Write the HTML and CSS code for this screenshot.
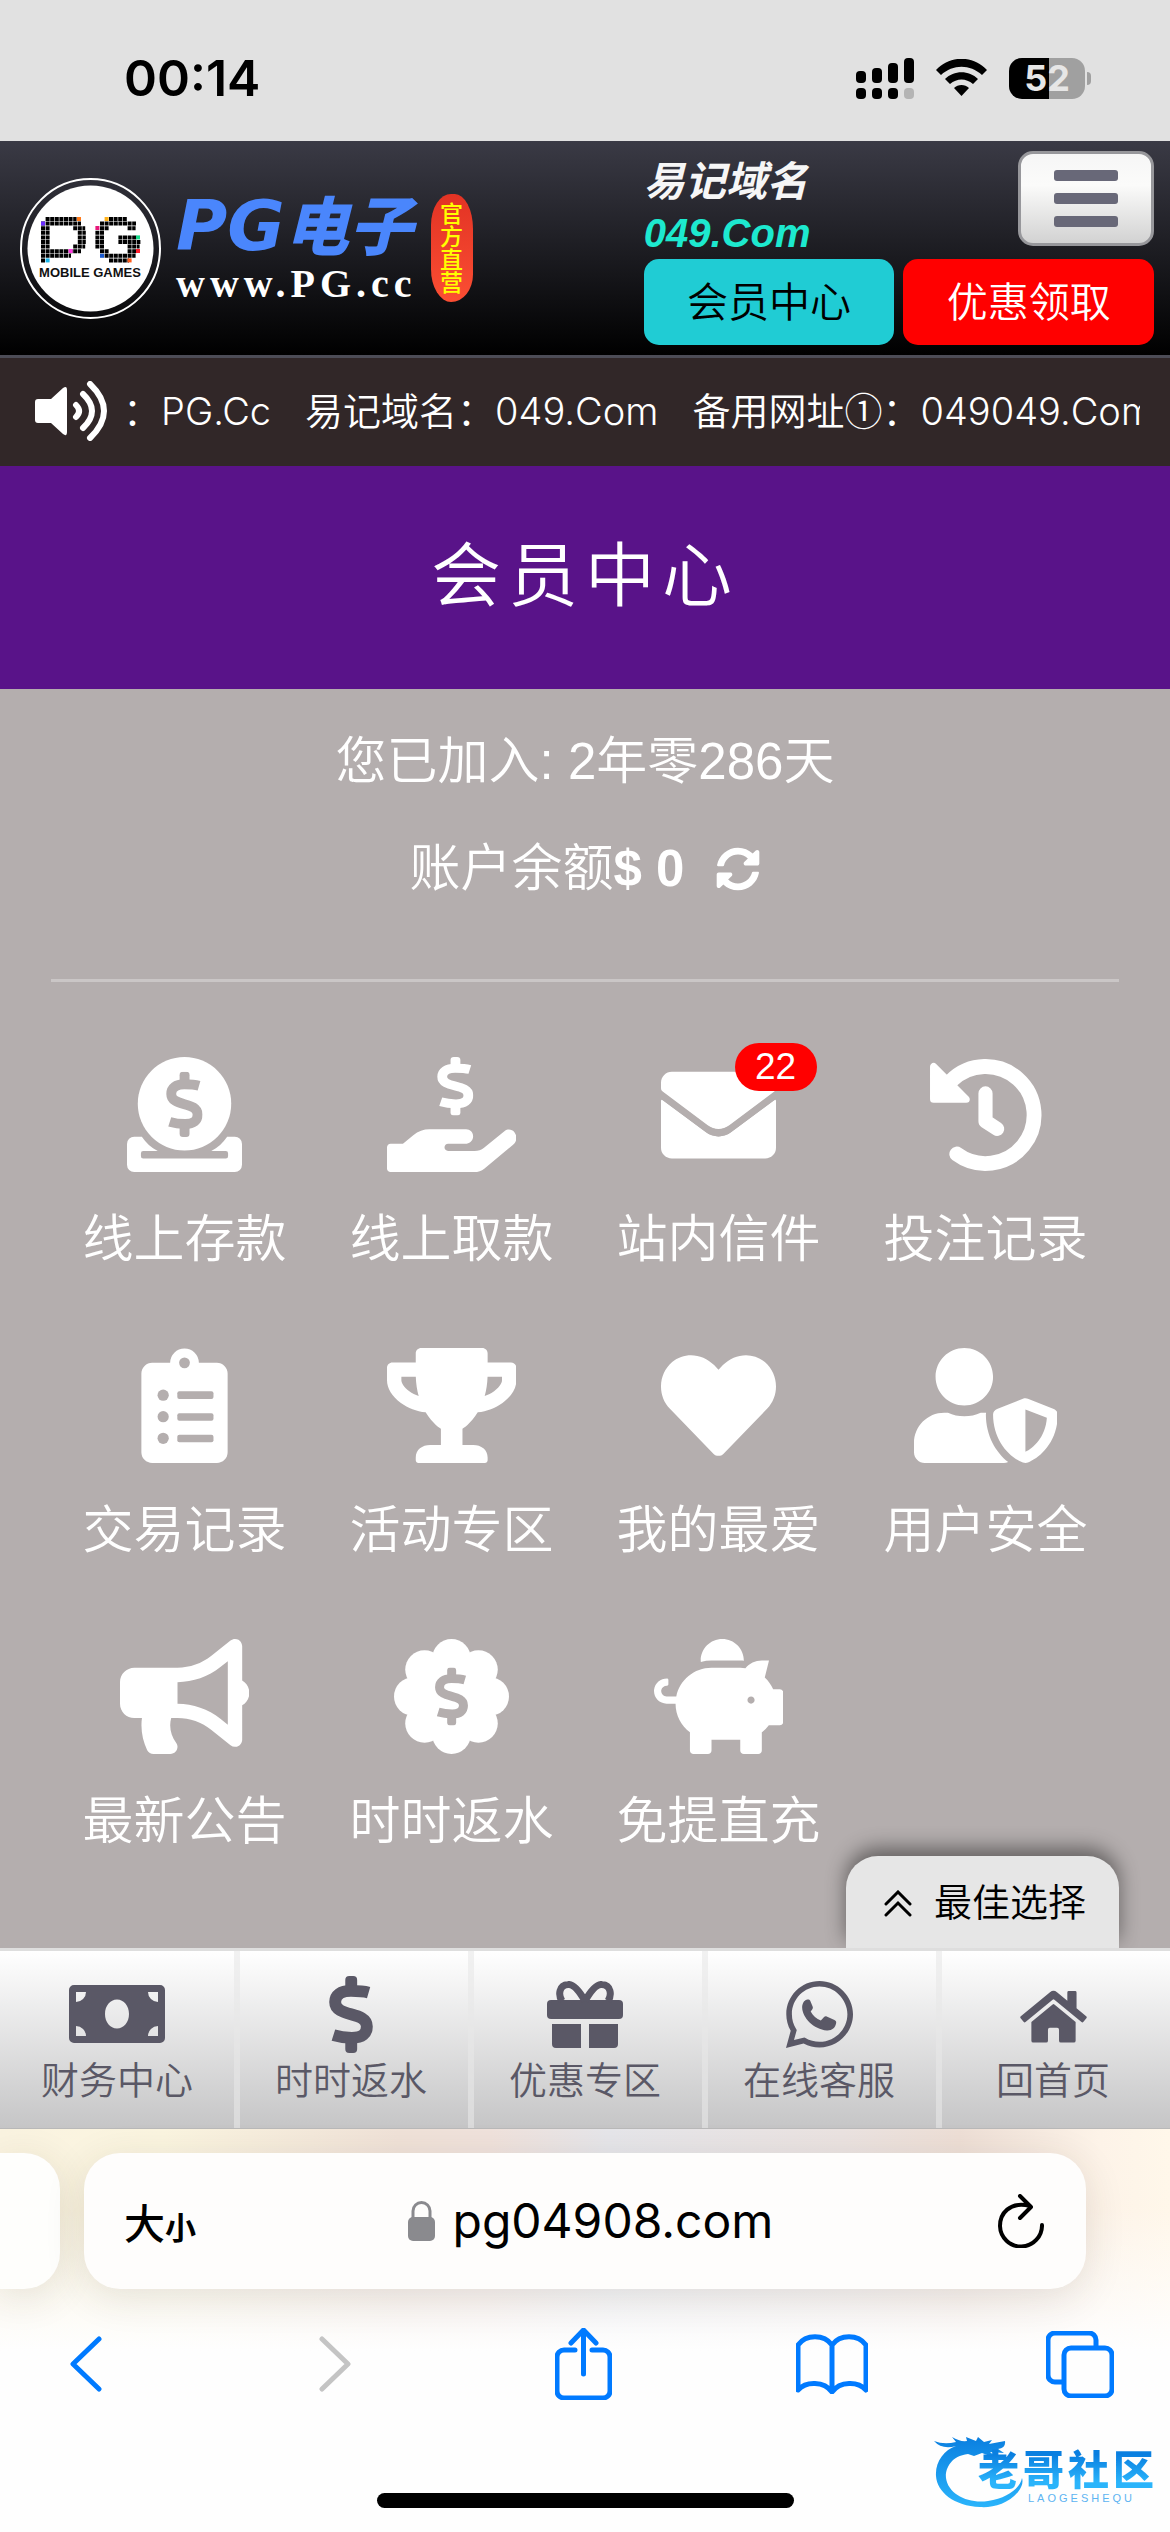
FILE: index.html
```html
<!DOCTYPE html>
<html lang="zh-CN">
<head>
<meta charset="utf-8">
<meta name="viewport" content="width=device-width, initial-scale=1">
<title>会员中心</title>
<link rel="stylesheet" href="styles.css">
</head>
<body>
<svg class="defs" width="0" height="0" aria-hidden="true">
  <symbol id="dollar" viewBox="0 0 100 177" preserveAspectRatio="none">
    <rect x="37" y="0" width="27" height="34" rx="9" fill="currentColor"/>
    <rect x="37" y="143" width="27" height="34" rx="9" fill="currentColor"/>
    <path d="M90 38C76 34 64 34 50 34C26 34 14 44 14 60C14 96 86 80 86 116C86 132 76 142 52 142C38 142 26 141 10 136" fill="none" stroke="currentColor" stroke-width="27"/>
  </symbol>
</svg>

<div class="status">
  <time class="clock">00:14</time>
  <div class="status-icons">
    <svg width="58" height="41" viewBox="0 0 58 41">
      <g fill="#000"><rect x="0" y="13" width="10" height="12" rx="4"/><rect x="16" y="10" width="10" height="15" rx="4"/><rect x="32" y="5" width="10" height="20" rx="4"/><rect x="48" y="0" width="10" height="25" rx="4"/>
      <rect x="0" y="30" width="10" height="11" rx="4"/><rect x="16" y="30" width="10" height="11" rx="4"/><rect x="32" y="30" width="10" height="11" rx="4"/></g>
      <rect x="48" y="30" width="10" height="11" rx="4" fill="#b4b4b4"/>
    </svg>
    <svg width="51" height="38" viewBox="0 0 51 38">
      <path d="M0 11C14-4 37-4 51 11L46 16C34 5 17 5 5 16zM9 20C18 11 33 11 42 20L37 25C30 19 21 19 14 25zM18 29C22 25 29 25 33 29L25.500 37z" fill="#000"/>
    </svg>
    <div class="battery"><span class="battery-level">52</span></div>
  </div>
</div>

<header class="header">
  <a class="brand" href="#">
    <svg class="emblem" width="141" height="141" viewBox="0 0 141 141">
      <circle cx="70.500" cy="70.500" r="69.500" fill="none" stroke="#fff" stroke-width="2"/>
      <circle cx="70.500" cy="70.500" r="63" fill="#fff"/>
      <g stroke="#000" stroke-width="4" stroke-dasharray="4 .6" fill="none">
        <path d="M25.600 41h31M21 45.600h40M21 50.200h9M53.200 50.200h12M21 54.800h9M57.800 54.800h8M21 59.400h9M57.800 59.400h8M21 64h9M57.800 64h8M21 68.600h9M53.200 68.600h12M21 73.200h40M21 77.800h30M21 82.400h4"/>
        <path d="M89 41h18M80 45.600h36M80 50.200h9M107.600 50.200h8M75.400 54.800h9M75.400 59.400h9M98.400 59.400h18M75.400 64h9M98.400 64h22M75.400 68.600h9M107.600 68.600h12M80 73.200h9M107.600 73.200h9M84.600 77.800h31M89 82.400h20"/>
      </g>
      <rect x="21" y="43.500" width="4" height="4" fill="#6a2cff"/><rect x="57" y="39" width="4" height="4" fill="#ff7a1a"/><rect x="48.600" y="71" width="4" height="4" fill="#ff3ae0"/><rect x="25.600" y="80.400" width="4" height="4" fill="#19b5ea"/>
      <rect x="84.600" y="39" width="4" height="4" fill="#ffb21a"/><rect x="75.400" y="48" width="4" height="4" fill="#e6177a"/><rect x="116" y="57.400" width="4" height="4" fill="#19d98b"/><rect x="116" y="71" width="4" height="4" fill="#ff1f2d"/><rect x="80" y="75.800" width="4" height="4" fill="#1a5ad0"/><rect x="107.600" y="80.400" width="4" height="4" fill="#ff5a1a"/>
      <text class="emblem-text" x="70" y="99" text-anchor="middle">MOBILE GAMES</text>
    </svg>
    <span class="wordmark">
      <span class="wordmark-name"><span class="wordmark-latin">PG</span>电子</span>
      <span class="wordmark-url">www.PG.cc</span>
    </span>
    <span class="seal">官方直营</span>
  </a>
  <div class="header-side">
    <div class="header-top">
      <p class="domain">易记域名<br><span class="domain-url">049.Com</span></p>
      <button class="menu" type="button" aria-label="菜单"><span class="menu-bar"></span><span class="menu-bar"></span><span class="menu-bar"></span></button>
    </div>
    <div class="header-buttons">
      <button class="pill pill-member" type="button">会员中心</button>
      <button class="pill pill-bonus" type="button">优惠领取</button>
    </div>
  </div>
</header>

<div class="notice">
  <svg class="notice-icon" width="72" height="60" viewBox="0 0 72 60">
    <path d="M3 18h13L28 7q4-3 4 2v42q0 5-4 2L16 42H3q-3 0-3-3V21q0-3 3-3z" fill="#fff"/>
    <path d="M41 24q6 6 0 12M48 13q18 17 0 34M55 3q28 27 0 54" fill="none" stroke="#fff" stroke-width="6" stroke-linecap="round"/>
  </svg>
  <p class="notice-text"><span>：</span><span class="notice-item">PG.Cc</span><span class="notice-item">易记域名：049.Com</span><span class="notice-item">备用网址<span class="circled">①</span>：049049.Com</span></p>
</div>

<h1 class="title">会员中心</h1>

<main class="member">
  <p class="info">您已加入: 2年零286天</p>
  <p class="info">账户余额<b>$ 0</b>
    <button class="refresh" type="button" aria-label="刷新余额"><svg width="44" height="44" viewBox="0 0 512 512" fill="#fff"><path d="M370.720 133.280C339.458 104.008 298.888 87.962 255.848 88c-77.458.068-144.328 53.178-162.791 126.850-1.344 5.363-6.122 9.150-11.651 9.150H24.103c-7.498 0-13.194-6.807-11.807-14.176C33.933 94.924 134.813 8 256 8c66.448 0 126.791 26.136 171.315 68.685L463.030 40.970C478.149 25.851 504 36.559 504 57.941V192c0 13.255-10.745 24-24 24H345.941c-21.382 0-32.090-25.851-16.971-40.971l41.750-41.749zM32 296h134.059c21.382 0 32.090 25.851 16.971 40.971l-41.750 41.750c31.262 29.273 71.835 45.319 114.876 45.280 77.418-.07 144.315-53.144 162.787-126.849 1.344-5.363 6.122-9.150 11.651-9.150h57.304c7.498 0 13.194 6.807 11.807 14.176C478.067 417.076 377.187 504 256 504c-66.448 0-126.791-26.136-171.315-68.685L48.970 471.030C33.851 486.149 8 475.441 8 454.059V320c0-13.255 10.745-24 24-24z"/></svg></button>
  </p>
  <hr class="rule">
  <nav class="grid">
    <a class="tile" href="#">
      <svg class="tile-icon" viewBox="0 0 512 512"><circle cx="256" cy="208" r="208"/><path d="M32 355H66C84 382 108 404 137 418H72q-10 0-10 10v14q0 10 10 10H440q10 0 10-10v-14q0-10-10-10H375C404 404 428 382 446 355H480a32 32 0 0 1 32 32V480a32 32 0 0 1-32 32H32a32 32 0 0 1-32-32V387a32 32 0 0 1 32-32z"/><use class="cut" href="#dollar" x="174" y="66" width="163" height="290"/></svg>
      <span>线上存款</span></a>
    <a class="tile" href="#">
      <svg class="tile-icon" viewBox="0 0 576 512"><use href="#dollar" x="223" y="0" width="162" height="260"/><path d="M568 336c13 18 10 42-8 56L433 497c-12 10-28 15-44 15H16c-9 0-16-7-16-16V402c0-9 7-16 16-16H71l46-38c22-18 46-26 72-26H352c20 0 34 17 31 36-2 16-17 28-34 28H272c-9 0-16 7-16 16s7 16 16 16H390c16 0 30-4 42-14l92-74c14-11 33-8 44 6z"/></svg>
      <span>线上取款</span></a>
    <a class="tile" href="#">
      <svg class="tile-icon" viewBox="0 0 512 512"><path d="M48 66h416a48 48 0 0 1 48 48v24c0 8-3 12-9 17L304 304c-28 22-68 22-96 0L9 155c-6-5-9-9-9-17v-24a48 48 0 0 1 48-48z"/><path d="M0 197q0-10 9-4L199 334c34 26 80 26 114 0L503 193q9-6 9 4V404a48 48 0 0 1-48 48H48a48 48 0 0 1-48-48z"/><path class="cut" d="M0 152L205 305c31 22 71 22 102 0L512 152V187L313 334c-34 26-80 26-114 0L0 187z"/></svg>
      <span class="badge">22</span>
      <span>站内信件</span></a>
    <a class="tile" href="#">
      <svg class="tile-icon" viewBox="0 0 512 512"><g fill="none" stroke="#fff" stroke-width="66" stroke-linecap="round" stroke-linejoin="round"><path d="M128 432A216 216 0 1 0 103 106"/><path stroke-width="63" d="M256 162V286L308 320"/></g><path d="M25 43V188H170z" stroke="#fff" stroke-width="32" stroke-linejoin="round"/></svg>
      <span>投注记录</span></a>
    <a class="tile" href="#">
      <svg class="tile-icon" viewBox="0 0 512 512"><path d="M112 66h80a64 64 0 0 1 128 0h80a48 48 0 0 1 48 48v350a48 48 0 0 1-48 48H112a48 48 0 0 1-48-48V114a48 48 0 0 1 48-48z"/><g class="cut"><circle cx="256" cy="66" r="24"/><circle cx="161" cy="210" r="25"/><circle cx="161" cy="306" r="25"/><circle cx="161" cy="402" r="25"/><rect x="224" y="193" width="161" height="34" rx="9"/><rect x="224" y="290" width="161" height="34" rx="9"/><rect x="224" y="386" width="161" height="34" rx="9"/></g></svg>
      <span>交易记录</span></a>
    <a class="tile" href="#">
      <svg class="tile-icon" viewBox="0 0 576 512"><path d="M552 64H448V24c0-13.300-10.700-24-24-24H152c-13.300 0-24 10.700-24 24v40H24C10.700 64 0 74.700 0 88v56c0 35.700 22.500 72.400 61.900 100.700 31.500 22.700 69.800 37.100 110 41.700C203.300 338.500 240 360 240 360v72h-48c-35.300 0-64 20.700-64 56v12c0 6.600 5.400 12 12 12h296c6.600 0 12-5.400 12-12v-12c0-35.300-28.700-56-64-56h-48v-72s36.700-21.500 68.100-73.600c40.300-4.600 78.600-19 110-41.700 39.300-28.300 61.900-65 61.900-100.700V88c0-13.300-10.700-24-24-24zM99.300 192.800C74.900 175.200 64 155.600 64 144v-16h64.200c1 32.600 5.800 61.200 12.800 86.200-15.100-5.200-29.200-12.400-41.700-21.400zM512 144c0 16.100-17.700 36.100-35.300 48.800-12.500 9-26.700 16.200-41.800 21.400 7-25 11.800-53.600 12.800-86.200H512v16z"/></svg>
      <span>活动专区</span></a>
    <a class="tile" href="#">
      <svg class="tile-icon" viewBox="0 0 512 512"><path d="M462.300 62.600C407.500 15.900 326 24.300 275.700 76.200L256 96.500l-19.700-20.300C186.100 24.300 104.500 15.900 49.700 62.600c-62.800 53.600-66.100 149.800-9.900 207.900l193.500 199.800c12.500 12.900 32.800 12.900 45.300 0l193.500-199.800c56.300-58.100 53-154.300-9.800-207.900z"/></svg>
      <span>我的最爱</span></a>
    <a class="tile" href="#">
      <svg class="tile-icon" viewBox="0 0 640 512"><path d="M622.300 271.100l-115.200-45c-4.100-1.600-12.600-3.700-22.200 0l-115.200 45c-10.700 4.200-17.700 14-17.700 24.900 0 111.600 68.700 188.800 132.900 213.900 9.600 3.700 18 1.600 22.200 0C558.400 489.900 640 420.500 640 296c0-10.900-7-20.700-17.700-24.900zM496 462.400V273.300l95.500 37.300c-5.600 87.100-60.900 135.400-95.500 151.800zM224 256c70.700 0 128-57.300 128-128S294.700 0 224 0 96 57.300 96 128s57.300 128 128 128zm96 40c0-2.500.8-4.800 1.100-7.200-2.500-.1-4.900-.8-7.500-.8h-16.700c-22.200 10.200-46.900 16-72.900 16s-50.600-5.800-72.900-16h-16.700C60.200 288 0 348.200 0 422.400V464c0 26.500 21.500 48 48 48h352c6.800 0 13.300-1.500 19.200-4-54-42.900-99.200-116.700-99.200-212z"/></svg>
      <span>用户安全</span></a>
    <a class="tile" href="#">
      <svg class="tile-icon" viewBox="0 0 576 512"><path d="M576 240c0-23.630-12.950-44.040-32-55.120V32.010C544 23.260 537.020 0 512 0c-7.120 0-14.190 2.380-19.980 7.020l-85.030 68.030C364.280 109.190 310.660 128 256 128H64c-35.350 0-64 28.650-64 64v96c0 35.350 28.650 64 64 64h33.700c-1.390 10.480-2.180 21.140-2.180 32 0 39.770 9.260 77.350 25.560 110.940 5.190 10.690 16.520 17.060 28.400 17.060h74.280c26.050 0 41.690-29.840 25.900-50.560-16.400-21.520-26.150-48.360-26.150-77.440 0-11.110 1.620-21.790 4.410-32H256c54.660 0 108.280 18.810 150.980 52.950l85.030 68.030a32.023 32.023 0 0 0 19.980 7.020c24.920 0 32-22.780 32-32V295.130C563.050 284.040 576 263.630 576 240zm-96 141.420l-33.050-26.440C392.950 311.780 325.120 288 256 288v-96c69.120 0 136.950-23.780 190.950-66.980L480 98.580v282.840z"/></svg>
      <span>最新公告</span></a>
    <a class="tile" href="#">
      <svg class="tile-icon" viewBox="0 0 512 512"><circle cx="256" cy="256" r="180"/><circle cx="256" cy="86" r="86"/><circle cx="256" cy="426" r="86"/><circle cx="86" cy="256" r="86"/><circle cx="426" cy="256" r="86"/><circle cx="136" cy="136" r="86"/><circle cx="376" cy="136" r="86"/><circle cx="136" cy="376" r="86"/><circle cx="376" cy="376" r="86"/><use class="cut" href="#dollar" x="182" y="127" width="148" height="258"/></svg>
      <span>时时返水</span></a>
    <a class="tile" href="#">
      <svg class="tile-icon" viewBox="0 0 576 512"><path d="M560 224h-29.500c-8.800-20-21.600-37.700-37.400-52.500L512 96h-32c-29.400 0-55.400 13.500-73 34.300-7.600-1.100-15.100-2.300-23-2.300H256c-77.400 0-141.900 55-156.800 128H56c-14.800 0-26.500-13.500-23.500-28.800C34.700 215.800 45.400 208 57 208h1c3.300 0 6-2.700 6-6v-20c0-3.300-2.700-6-6-6-28.500 0-53.900 20.400-57.500 48.600C-3.900 258.800 22.700 288 56 288h40c0 52.200 25.400 98.100 64 127.300V496c0 8.800 7.200 16 16 16h64c8.800 0 16-7.200 16-16v-48h128v48c0 8.800 7.200 16 16 16h64c8.800 0 16-7.200 16-16v-80.700c11.800-8.900 22.300-19.400 31.300-31.300H560c8.800 0 16-7.200 16-16V240c0-8.800-7.200-16-16-16zm-128 64c-8.800 0-16-7.200-16-16s7.200-16 16-16 16 7.200 16 16-7.200 16-16 16zM256 96h128c5.400 0 10.700.4 15.900.8 0-.3.1-.5.1-.8 0-53-43-96-96-96s-96 43-96 96c0 2.100.5 4.100.6 6.200 15.200-3.900 31-6.200 47.400-6.200z"/></svg>
      <span>免提直充</span></a>
  </nav>
</main>

<div class="dock">
  <button class="best" type="button"><svg width="28" height="27" viewBox="0 0 28 27" fill="none" stroke="#000" stroke-width="3" stroke-linecap="round"><path d="M2 14L14 2L26 14M2 25L14 13L26 25"/></svg>最佳选择</button>
  <nav class="tabs">
    <a class="tab" href="#"><span class="tab-icon"><svg width="96" height="58" viewBox="0 0 96 58"><path fill="currentColor" fill-rule="evenodd" d="M5 0H91a5 5 0 0 1 5 5V53a5 5 0 0 1-5 5H5a5 5 0 0 1-5-5V5a5 5 0 0 1 5-5zM7 7V17A10 10 0 0 0 17 7zM79 7A10 10 0 0 0 89 17V7zM7 51H17A10 10 0 0 0 7 41zM79 51H89V41A10 10 0 0 0 79 51zM48 14.500C41 14.500 36 21 36 29S41 43.500 48 43.500S60 37 60 29S55 14.500 48 14.500z"/></svg></span>财务中心</a>
    <a class="tab" href="#"><span class="tab-icon"><svg width="44" height="77"><use href="#dollar" width="44" height="77"/></svg></span>时时返水</a>
    <a class="tab" href="#"><span class="tab-icon"><svg width="76" height="67" viewBox="0 0 76 67"><g fill="currentColor"><rect y="19" width="76" height="19" rx="4"/><path d="M5 43H34V67H9a4 4 0 0 1-4-4zM42 43H71V63a4 4 0 0 1-4 4H42z"/></g><path d="M38 20C30 6 25 3 21 3.500C12 4 11 14 15 20M38 20C46 6 51 3 55 3.500C64 4 65 14 61 20" fill="none" stroke="currentColor" stroke-width="7"/></svg></span>优惠专区</a>
    <a class="tab" href="#"><span class="tab-icon"><svg width="67" height="67" viewBox="0 32 448 448" fill="currentColor"><path d="M380.900 97.100C339 55.100 283.200 32 223.900 32c-122.400 0-222 99.600-222 222 0 39.100 10.200 77.300 29.600 111L0 480l117.700-30.900c32.400 17.700 68.900 27 106.100 27h.1c122.300 0 224.100-99.600 224.100-222 0-59.300-25.200-115-67.100-157zm-157 341.600c-33.200 0-65.700-8.900-94-25.700l-6.700-4-69.800 18.300L72 359.200l-4.400-7c-18.500-29.400-28.200-63.300-28.200-98.200 0-101.700 82.800-184.500 184.600-184.500 49.300 0 95.600 19.200 130.400 54.100 34.800 34.900 56.200 81.200 56.100 130.500 0 101.800-84.900 184.600-186.600 184.600z"/><path d="M138 157c10-3 20-2 24 7l16 38c3 8 2 14-3 20l-10 14c16 28 38 48 68 60l20-22c6-6 12-8 19-5l52 24c12 6 13 12 11 22-5 30-28 50-62 48-88-8-164-86-165-154 0-28 14-48 30-52z"/></svg></span>在线客服</a>
    <a class="tab" href="#"><span class="tab-icon"><svg width="67" height="59" viewBox="0 -20 576 512" fill="currentColor"><path d="M280.370 148.260L96 300.110V464a16 16 0 0 0 16 16l112.060-.29a16 16 0 0 0 15.920-16V368a16 16 0 0 1 16-16h64a16 16 0 0 1 16 16v95.640a16 16 0 0 0 16 16.050L464 480a16 16 0 0 0 16-16V300L295.670 148.260a12.190 12.190 0 0 0-15.300 0zM571.600 251.470L488 182.560V44.050a12 12 0 0 0-12-12h-56a12 12 0 0 0-12 12v72.610L318.470 43a48 48 0 0 0-61 0L4.340 251.470a12 12 0 0 0-1.600 16.900l25.500 31A12 12 0 0 0 45.150 301l235.220-193.740a12.190 12.190 0 0 1 15.300 0L530.900 301a12 12 0 0 0 16.900-1.600l25.500-31a12 12 0 0 0-1.700-16.930z"/></svg></span>回首页</a>
  </nav>
</div>

<footer class="browser">
  <div class="address-row">
    <div class="address-prev"></div>
    <div class="address">
      <button class="text-size" type="button" aria-label="文字大小">大<small>小</small></button>
      <div class="address-site">
        <svg width="27" height="40" viewBox="0 0 27 40"><rect y="16" width="27" height="24" rx="5" fill="#8a8a8e"/><path d="M5 18V10a8.500 8.500 0 0 1 17 0v8" fill="none" stroke="#8a8a8e" stroke-width="3"/></svg>
        <input class="address-input" type="text" value="pg04908.com" aria-label="网址">
      </div>
      <button class="reload" type="button" aria-label="重新载入"><svg width="46" height="54" viewBox="0 0 46 54" fill="none" stroke="#000" stroke-width="4" stroke-linecap="round" stroke-linejoin="round"><path d="M32 12C11 7 2 20 2 32a20.500 20.500 0 0 0 42-1M22 2L33 13L22 24"/></svg></button>
    </div>
  </div>
  <div class="toolbar">
    <button class="tool" type="button" aria-label="后退"><svg width="34" height="56" viewBox="0 0 34 56"><path d="M30 3L4 28L30 53"/></svg></button>
    <button class="tool tool-off" type="button" aria-label="前进" disabled><svg width="34" height="56" viewBox="0 0 34 56"><path d="M4 3L30 28L4 53"/></svg></button>
    <button class="tool" type="button" aria-label="分享"><svg width="57" height="72" viewBox="0 0 57 72"><path d="M20 22H9a7 7 0 0 0-7 7V63a7 7 0 0 0 7 7H48a7 7 0 0 0 7-7V29a7 7 0 0 0-7-7H37M28.500 46V3M16 15L28.500 2L41 15"/></svg></button>
    <button class="tool" type="button" aria-label="书签"><svg width="72" height="60" viewBox="0 0 72 60"><path d="M36 11C28 0 10 0 2 11V56C10 47 28 47 36 58C44 47 62 47 70 56V11C62 0 44 0 36 11V57"/></svg></button>
    <button class="tool" type="button" aria-label="标签页"><svg width="68" height="67" viewBox="0 0 68 67"><path d="M17 51H9a7 7 0 0 1-7-7V9a7 7 0 0 1 7-7H43a7 7 0 0 1 7 7V16"/><rect x="18" y="17" width="48" height="48" rx="7"/></svg></button>
  </div>
  <div class="home-bar"></div>
  <div class="watermark">
    <svg class="watermark-dragon" width="92" height="76" viewBox="0 0 92 76">
      <defs><linearGradient id="sea" x1="0" y1="0" x2="0" y2="1"><stop offset="0" stop-color="#0a7fe0"/><stop offset="1" stop-color="#2ab4fb"/></linearGradient></defs>
      <path fill="url(#sea)" d="M0 9Q10 13 22 10L18 5Q26 10 33 9L32 5L42 9L44 5L50 10L58 8L55 12L71 9Q72 16 64 17L70 21L56 20L64 27L48 21L40 24L34 22C16 24 11 38 12 46C14 62 34 72 54 69C74 66 86 56 88 46Q90 52 84 60C74 72 58 76 46 75C20 74 3 60 2 44C1 30 10 18 22 14Q8 18 0 9z"/>
    </svg>
    <div class="watermark-text">
      <div class="watermark-name">老哥社区</div>
      <div class="watermark-latin">LAOGESHEQU</div>
    </div>
  </div>
</footer>
</body>
</html>
```

FILE: styles.css
```css
* { box-sizing: border-box; }

body {
  margin: 0;
  background: #b4aeae;
  font-family: "Liberation Sans", "Noto Sans CJK SC", sans-serif;
  font-weight: 350;
}

p, h1 { margin: 0; }
a { color: inherit; text-decoration: none; }
svg { display: block; flex: none; }
.defs { position: absolute; }

button {
  padding: 0;
  border: 0;
  background: none;
  color: inherit;
  font: inherit;
}

/* Phone status bar */
.status {
  display: flex;
  justify-content: space-between;
  align-items: center;
  padding: 48px 85px 33px 124px;
  background: #e1e1e1;
}
.clock {
  font: 600 50px/60px Inter, sans-serif;
  color: #000;
}
.status-icons { display: flex; align-items: center; gap: 22px; }
.battery { position: relative; }
.battery-level {
  display: block;
  width: 76px;
  border-radius: 13px;
  background: linear-gradient(90deg, #000 52%, #a0a0a0 52%);
  color: #e6e6e6;
  font: 700 36px/41px Inter, sans-serif;
  text-align: center;
}
.battery::after {
  content: "";
  position: absolute;
  right: -6px;
  top: 14px;
  width: 4px;
  height: 13px;
  border-radius: 0 4px 4px 0;
  background: #a0a0a0;
}

/* Site header */
.header {
  display: flex;
  justify-content: space-between;
  align-items: center;
  padding: 10px 16px 10px 20px;
  border-bottom: 3px solid #4c4c56;
  background: linear-gradient(#3a3a45, #000);
}
.brand { display: flex; align-items: center; }
.emblem-text { font: 700 13px "Liberation Sans", sans-serif; fill: #111; }
.wordmark {
  display: flex;
  flex-direction: column;
  margin: 0 14px 0 15px;
  white-space: nowrap;
}
.wordmark-name {
  color: #4a86fc;
  font: italic 900 64px/68px "Noto Sans CJK SC", sans-serif;
}
.wordmark-latin { font-family: "DejaVu Sans", sans-serif; font-weight: 700; font-size: 70px; }
.wordmark-url {
  color: #fff;
  font: 700 40px/48px "Liberation Serif", serif;
  letter-spacing: 5px;
}
.seal {
  padding: 8px 9px;
  border-radius: 22px 20px 24px 22px / 34px 38px 30px 36px;
  background: linear-gradient(#e23324, #fb4e33);
  color: #ff0;
  font: 500 23px/24px "Noto Sans CJK SC", sans-serif;
  writing-mode: vertical-rl;
}
.header-side { width: 45%; }
.header-top {
  display: flex;
  justify-content: space-between;
  align-items: flex-start;
}
.domain {
  padding-top: 6px;
  color: #f6f6f6;
  font: italic 700 41px/51px "Liberation Sans", "Noto Sans CJK SC", sans-serif;
}
.domain-url { color: #1de9cf; font-size: 40px; }
.menu {
  display: flex;
  flex-direction: column;
  gap: 12px;
  padding: 16px 33px;
  width: 136px;
  border: 3px solid #97979b;
  border-radius: 15px;
  background: linear-gradient(#f6f6f6, #fbfbfa 35%, #d2d2d2);
}
.menu-bar { height: 11px; border-radius: 3px; background: #686878; }
.header-buttons { display: flex; gap: 9px; }
.pill {
  flex: 1;
  padding-top: 2px;
  border-radius: 15px;
  font-size: 41px;
  line-height: 84px;
}
.pill-member { background: #20ccd4; color: #000; }
.pill-bonus { background: #f00; color: #fff; }

/* Scrolling notice */
.notice {
  display: flex;
  align-items: center;
  gap: 16px;
  padding: 23px 30px 25px 35px;
  background: #312728;
}
.notice-text {
  display: flex;
  flex: 1;
  min-width: 0;
  overflow: hidden;
  color: #fff;
  font: 350 38px/60px Inter, "Noto Sans CJK SC", sans-serif;
  white-space: nowrap;
}
.notice-item { margin-right: 34px; }
.circled { font-family: "Noto Sans CJK SC", sans-serif; line-height: 40px; }

.title {
  background: #591389;
  color: #fff;
  font-size: 70px;
  font-weight: 350;
  line-height: 223px;
  letter-spacing: 7px;
  text-align: center;
}

/* Member panel */
.member {
  padding: 19px 51px 96px;
  color: #fff;
  font-size: 51px;
}
.info {
  display: flex;
  justify-content: center;
  align-items: center;
  line-height: 107px;
  white-space: pre;
}
.info b { font-weight: 700; }
.refresh { margin-left: 32px; }
.rule {
  height: 3px;
  margin: 57px 0 75px;
  border: 0;
  background: #cac6c6;
}
.grid {
  display: grid;
  grid-template-columns: repeat(4, 1fr);
  row-gap: 78px;
}
.tile {
  position: relative;
  display: flex;
  flex-direction: column;
  align-items: center;
  gap: 38px;
  line-height: 60px;
  white-space: nowrap;
}
.tile-icon { height: 115px; fill: #fff; }
.cut { color: #b4aeae; fill: #b4aeae; }
.badge {
  position: absolute;
  left: 56%;
  top: -14px;
  width: 82px;
  border-radius: 24px;
  background: #f00;
  font-size: 37px;
  line-height: 48px;
  text-align: center;
}

/* Bottom dock */
.dock { position: relative; }
.best {
  position: absolute;
  right: 51px;
  bottom: 100%;
  display: flex;
  align-items: center;
  gap: 22px;
  padding: 2px 33px 0 38px;
  border-radius: 32px 32px 0 0;
  background: #e6e6e6;
  box-shadow: 0 -8px 20px rgba(0, 0, 0, 0.45);
  clip-path: inset(-40px -40px 0);
  color: #000;
  font-size: 38px;
  line-height: 90px;
  white-space: nowrap;
}
.tabs {
  display: grid;
  grid-template-columns: repeat(5, 1fr);
  border-top: 3px solid #dedede;
  background: linear-gradient(#fff, #c5c5c6);
}
.tab {
  padding: 24px 0 26px;
  color: #5a5866;
  font-size: 38px;
  line-height: 44px;
  text-align: center;
  white-space: nowrap;
}
.tab + .tab { box-shadow: inset 6px 0 rgba(232, 232, 232, 0.6); }
.tab-icon {
  display: flex;
  align-items: center;
  justify-content: center;
  height: 78px;
  margin-bottom: 6px;
}

/* Browser chrome */
.browser {
  position: relative;
  padding: 24px 0;
  border-top: 1px solid #b9b9b9;
  margin-top: -1px;
  background:
    linear-gradient(rgba(255, 255, 255, 0) 20%, #fefefe 55%),
    linear-gradient(90deg, #faf3e0, #fbf5e0 14%, #f0e2d8 34%, #f0e2dc 42%, #e6e6ea 52%, #ebe3e1 72%, #eedfd6 82%, #fdf3e8 94%, #fff7ea);
}
.address-row { display: flex; gap: 24px; padding-right: 84px; }
.address-prev {
  width: 60px;
  border-radius: 0 36px 36px 0;
  background: #fefefc;
  box-shadow: 0 8px 40px rgba(60, 50, 30, 0.12);
}
.address {
  flex: 1;
  display: flex;
  align-items: center;
  justify-content: space-between;
  padding: 38px 42px 38px 40px;
  border-radius: 36px;
  background: #fefdfc;
  box-shadow: 0 8px 40px rgba(60, 50, 30, 0.12);
}
.text-size {
  display: flex;
  align-items: baseline;
  color: #000;
  font: 500 41px/52px "Noto Sans CJK SC", sans-serif;
  white-space: nowrap;
}
.text-size small { font-size: 31px; font-weight: 700; line-height: 40px; }
.address-site { display: flex; align-items: center; gap: 18px; }
.address-input {
  width: 334px;
  height: 60px;
  padding: 0;
  border: 0;
  background: none;
  color: #000;
  font: 400 48px/60px Inter, sans-serif;
}
.toolbar {
  display: flex;
  justify-content: space-between;
  padding: 39px 56px 0 52px;
}
.tool {
  display: flex;
  align-items: center;
  justify-content: center;
  width: 68px;
  height: 72px;
  fill: none;
  stroke: #007aff;
  stroke-width: 5px;
  stroke-linecap: round;
  stroke-linejoin: round;
}
.tool-off { stroke: #c4c4c4; }
.home-bar {
  width: 417px;
  height: 15px;
  margin: 93px auto 0;
  border-radius: 8px;
  background: #000;
}
.watermark {
  position: absolute;
  right: 16px;
  bottom: 24px;
}
.watermark-dragon { position: absolute; right: 128px; bottom: 0; }
.watermark-text { position: relative; padding-bottom: 4px; }
.watermark-name {
  margin-right: -4px;
  background: linear-gradient(#0a7fe0 25%, #2ab4fb 80%);
  background-clip: text;
  color: transparent;
  font: 900 41px/50px "Noto Sans CJK SC", sans-serif;
  letter-spacing: 4px;
}
.watermark-latin {
  margin-left: 50px;
  color: #5db4f2;
  font: 400 11px/12px "Liberation Sans", sans-serif;
  letter-spacing: 3px;
}
```
